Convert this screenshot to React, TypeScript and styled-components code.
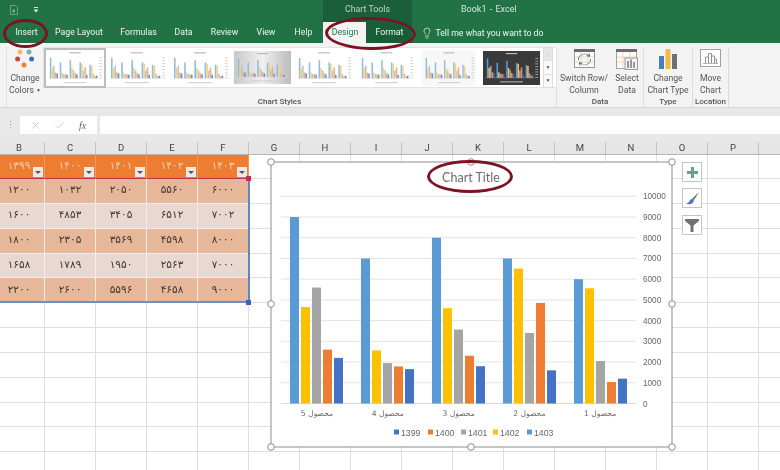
import React from "react";
import styled, { createGlobalStyle } from "styled-components";
import { X, Check, Lightbulb } from "lucide-react";

const Global = createGlobalStyle`
  html, body { margin: 0; padding: 0; background: #fff; overflow: hidden; }
  #root { width: 780px; height: 470px; overflow: hidden; }
  * { box-sizing: border-box; }
`;

const Page = styled.div`
  width: 780px; height: 470px; position: relative; overflow: hidden;
  font-family: Roboto, "Liberation Sans", sans-serif; color: #444;
  filter: blur(0.35px);
`;
const TitleBar = styled.div`
  height: 22px; background: #217346; display: flex; color: #d5e6da; font-size: 9px; line-height: 19px;
`;
const Quick = styled.div`
  width: 323px; display: flex; align-items: center; padding: 0 0 3px 10px; gap: 15px;
`;
const ChartTools = styled.div`
  width: 89px; background: #1b5f3a; text-align: center; color: #bcd5c4; font-size: 8.8px;
`;
const DocName = styled.div` padding-left: 49px; word-spacing: 1px; `;
const TabRow = styled.div`
  height: 21px; background: #217346; display: flex; align-items: stretch; padding-left: 6.5px;
`;
const Tab = styled.div<{ $state?: "active" | "dark"; $w: number }>`
  width: ${(p) => p.$w}px; text-align: center; font-size: 8.7px; line-height: 21px; white-space: nowrap;
  color: ${(p) => (p.$state === "active" ? "#217346" : "#eef5f0")};
  background: ${(p) => (p.$state === "active" ? "#f3f3f3" : p.$state === "dark" ? "#185c38" : "transparent")};
  padding-left: ${(p) => (p.$state ? 2 : 0)}px;
`;
const TellMe = styled.div`
  display: flex; align-items: center; gap: 3px; padding-left: 9px; font-size: 8.7px; color: #eef5f0; white-space: nowrap;
`;
const Ribbon = styled.div`
  height: 65px; background: #f3f3f3; border-bottom: 1px solid #d8d8d8; display: flex; padding-top: 4px;
`;
const Group = styled.div<{ $w: number; $line?: boolean }>`
  width: ${(p) => p.$w}px; height: 60px; position: relative; display: flex; flex-direction: column;
  ${(p) => (p.$line ? "border-right: 1px solid #dcdcdc;" : "")}
`;
const GroupBody = styled.div` flex: 1; display: flex; min-height: 0; `;
const GroupLabel = styled.div<{ $shift?: number }>`
  height: 11px; text-align: center; font-size: 8px; line-height: 11px; color: #555; font-weight: 500;
  white-space: nowrap; padding-right: ${(p) => p.$shift ?? 0}px;
`;
const RibbonBtn = styled.div<{ $w: number }>`
  width: ${(p) => p.$w}px; display: flex; flex-direction: column; align-items: center;
  font-size: 8.6px; line-height: 11.5px; color: #555; text-align: center; white-space: nowrap;
  padding-top: 2px;
`;
const BtnIcon = styled.div` height: 24px; display: flex; align-items: flex-start; justify-content: center; `;
const Colors = styled(RibbonBtn)` margin-left: 6px; border-left: 1px solid #e2e2e2; `;
const Caret = styled.span` font-size: 5px; vertical-align: 1px; margin-left: 2px; `;
const Gallery = styled.div`
  display: grid; grid-template-columns: repeat(8, 62.3px); width: 514px; height: 41px; background: #fff;
  border: 1px solid #e3e3e3; align-items: center; justify-items: center; position: relative;
`;
const ThumbBox = styled.div<{ $on?: boolean; $w: number; $h: number }>`
  width: ${(p) => p.$w}px; height: ${(p) => p.$h}px;
  ${(p) => (p.$on ? "outline: 2.5px solid #bdbdbd;" : "")}
  svg { display: block; width: 100%; height: 100%; }
`;
const Scroller = styled.div`
  width: 10px; height: 41px; margin-left: -14px; display: flex; flex-direction: column; border: 1px solid #dcdcdc; background: #f8f8f8; z-index: 1;
`;
const ScrollPart = styled.div<{ $muted?: boolean }>`
  flex: 1; display: flex; align-items: center; justify-content: center; font-size: 5px; line-height: 1;
  color: ${(p) => (p.$muted ? "#ddd" : "#555")}; background: ${(p) => (p.$muted ? "#e6e6e6" : "transparent")};
  border-bottom: 1px solid #e0e0e0; &:last-child { border-bottom: 0; }
`;
const FormulaRow = styled.div`
  height: 34px; background: #e8e8e8; display: flex; align-items: flex-start; padding-top: 8px;
`;
const Grip = styled.div`
  width: 20px; text-align: center; color: #9a9a9a; font-size: 9px; line-height: 18px;
`;
const NameBox = styled.div`
  width: 77px; height: 18px; background: #fff; display: flex; align-items: center; justify-content: space-around; padding: 0 4px 0 3px;
`;
const Fx = styled.span` font-family: "Liberation Serif", serif; font-style: italic; font-size: 10px; color: #666; `;
const FormulaInput = styled.div` flex: 1; height: 18px; margin-left: 3px; background: #fff; `;
const Sheet = styled.div` position: relative; height: 328px; background: #fff; `;
const HeadRow = styled.div` display: flex; height: 13px; background: #e6e6e6; border-bottom: 1px solid #b5b5b5; `;
const HeadCell = styled.div<{ $w: number; $first?: boolean }>`
  width: ${(p) => p.$w}px; flex: none; text-align: center; font-size: 9.5px; line-height: 12px; color: #444;
  border-right: 1px solid #c4c4c4; padding-right: ${(p) => (p.$first ? 6 : 0)}px;
`;
const Row = styled.div<{ $h: number }>` display: flex; height: ${(p) => p.$h}px; `;
const Cell = styled.div<{ $w: number; $kind?: "head" | "dark" | "light"; $first?: boolean }>`
  width: ${(p) => p.$w}px; flex: none; position: relative;
  display: flex; align-items: center; justify-content: center;
  padding: 0 ${(p) => (p.$first ? 6 : 0)}px ${(p) => (p.$kind === "head" ? 4 : 3)}px 0;
  font-family: "DejaVu Sans", sans-serif; font-size: 10.5px; direction: rtl;
  border-right: 1px solid ${(p) => (p.$kind ? (p.$kind === "head" ? "#f09a5e" : "#f5ece7") : "#dedede")};
  border-bottom: 1px solid ${(p) => (p.$kind ? (p.$kind === "head" ? "#c2304c" : "#f5ece7") : "#dedede")};
  color: ${(p) => (p.$kind === "head" ? "#f7d0b4" : "#3d3631")};
  background: ${(p) => (p.$kind === "head" ? "#ed7d31" : p.$kind === "dark" ? "#e6b899" : p.$kind === "light" ? "#e8d8d1" : "#fff")};
`;
const Filter = styled.div`
  position: absolute; right: 1px; bottom: 1px; width: 10px; height: 10px; background: #ece9e8;
  display: flex; align-items: center; justify-content: center;
  &::after { content: ""; border-left: 3px solid transparent; border-right: 3px solid transparent; border-top: 3px solid #555; }
`;
const TableEdge = styled.div`
  position: absolute; left: 0; top: 36px; width: 250px; height: 125px;
  border-right: 2px solid #5b88c4; border-bottom: 2px solid #6c8fc6; pointer-events: none;
`;
const Knob = styled.div<{ $c: string; $top: number }>`
  position: absolute; left: 246px; top: ${(p) => p.$top}px; width: 5px; height: 5px; background: ${(p) => p.$c};
`;
const ChartLayer = styled.svg`
  position: absolute; left: 262px; top: 12px; width: 420px; height: 300px;
  font-family: "Liberation Sans", sans-serif;
`;
const SideBtn = styled.div<{ $top: number }>`
  position: absolute; left: 682px; top: ${(p) => p.$top}px; width: 20px; height: 20px; background: #fff;
  border: 1px solid #c4c4c4; display: flex; align-items: center; justify-content: center;
`;
const Ring = styled.div<{ $x: number; $y: number; $w: number; $h: number; $r?: number }>`
  position: absolute; left: ${(p) => p.$x}px; top: ${(p) => p.$y}px; width: ${(p) => p.$w}px; height: ${(p) => p.$h}px;
  border: 3px solid #7a1424; border-radius: 50%; transform: rotate(${(p) => p.$r ?? 0}deg); pointer-events: none;
`;

const COLS = ["B","C","D","E","F","G","H","I","J","K","L","M","N","O","P",""];
const HEADS = ["۱۳۹۹","۱۴۰۰","۱۴۰۱","۱۴۰۲","۱۴۰۳"];
const DATA = [
  ["۱۲۰۰","۱۰۳۲","۲۰۵۰","۵۵۶۰","۶۰۰۰"],
  ["۱۶۰۰","۴۸۵۳","۳۴۰۵","۶۵۱۲","۷۰۰۲"],
  ["۱۸۰۰","۲۳۰۵","۳۵۶۹","۴۵۹۸","۸۰۰۰"],
  ["۱۶۵۸","۱۷۸۹","۱۹۵۰","۲۵۶۳","۷۰۰۰"],
  ["۲۲۰۰","۲۶۰۰","۵۵۹۶","۴۶۵۸","۹۰۰۰"],
];
const SERIES = [
  [9000, 4658, 5596, 2600, 2200],
  [7000, 2563, 1950, 1789, 1658],
  [8000, 4598, 3569, 2305, 1800],
  [7000, 6512, 3405, 4853, 1600],
  [6000, 5560, 2050, 1032, 1200],
];
const BAR = ["#5b9bd5", "#ffc000", "#a5a5a5", "#ed7d31", "#4472c4"];
const colW = (i: number) => (i === 0 ? 45 : 51);

function Thumb({ w, h, bg = "#fff", on, dark, title = true }: { w: number; h: number; bg?: string; on?: boolean; dark?: boolean; title?: boolean }) {
  const id = `g${w}${h}${dark ? 1 : 0}`;
  const pale = dark ? ["#5b9bd5","#f2c46d","#a5a5a5","#e8915a","#4472c4"] : ["#8fbce4","#f1d27f","#c4c4c4","#eeac80","#6f8fd2"];
  return (
    <ThumbBox $on={on} $w={w} $h={h}>
      <svg viewBox="0 0 60 38" preserveAspectRatio="none">
        <defs>
          <linearGradient id={id} x1="0" y1="0" x2="1" y2="0">
            <stop offset="0" stopColor="#c8c8c8" />
            <stop offset="0.5" stopColor="#f0f0f0" />
            <stop offset="1" stopColor="#bcbcbc" />
          </linearGradient>
        </defs>
        <rect width="60" height="38" fill={bg === "grad" ? `url(#${id})` : bg} />
        {title && <rect x="24" y="2.500" width="12" height="1" fill={dark ? "#ddd" : "#aaa"} />}
        {SERIES.map((g, i) =>
          g.map((v, j) => (
            <rect key={`${i}${j}`} x={4 + i * 10.2 + j * 1.7} y={30 - v * 0.0024} width="1.6" height={v * 0.0024} fill={pale[j]} />
          ))
        )}
        <line x1="3" y1="30" x2="54" y2="30" stroke={dark ? "#bbb" : "#ddd"} strokeWidth="0.4" />
        {[8, 11, 14, 17, 20, 23, 26, 29].map((y) => (
          <rect key={y} x="55" y={y} width="3" height="0.8" fill={dark ? "#bbb" : "#c8c8c8"} />
        ))}
        <rect x="18" y="34" width="24" height="1" fill={dark ? "#ccc" : "#c8c8c8"} />
      </svg>
    </ThumbBox>
  );
}

function ChartDrawing() {
  const ox = 262, oy = 154;
  const base = 403.5, k = 207.2 / 10000;
  const bx = [0, 11, 22, 33, 44];
  const handles = [[271,162],[471,162],[672,162],[271,304],[672,304],[271,447],[471,447],[672,447]];
  const legend: [number, string, string][] = [
    [394, "#4472c4", "1399"], [428, "#ed7d31", "1400"], [461, "#a5a5a5", "1401"], [493, "#ffc000", "1402"], [527, "#5b9bd5", "1403"],
  ];
  return (
    <ChartLayer viewBox={`${ox} ${oy} 420 300`}>
      <rect x="271" y="162" width="401" height="285" fill="#fff" stroke="#a8a8a8" strokeWidth="1.3" />
      {[1,2,3,4,5,6,7,8,9,10].map((n) => (
        <line key={n} x1="281" x2="636" y1={base - n * 1000 * k} y2={base - n * 1000 * k} stroke="#e4e4e4" strokeWidth="1" />
      ))}
      <line x1="281" x2="636" y1={base} y2={base} stroke="#dadada" strokeWidth="1" />
      {SERIES.map((g, i) =>
        g.map((v, j) => (
          <rect key={`${i}-${j}`} x={290 + i * 71 + bx[j]} y={base - v * k} width="9" height={v * k} fill={BAR[j]} />
        ))
      )}
      {[0,1,2,3,4,5,6,7,8,9,10].map((n) => (
        <text key={n} x="643" y={base - n * 1000 * k + 3} fontSize="8.2" fill="#666">{n * 1000}</text>
      ))}
      {[5,4,3,2,1].map((n, i) => (
        <text key={n} x={317 + i * 70.8} y="416" fontSize="7.6" fill="#666" textAnchor="middle" direction="rtl" fontFamily="DejaVu Sans, sans-serif">{`محصول ${n}`}</text>
      ))}
      {legend.map(([x, c, t]) => (
        <g key={t}>
          <rect x={x} y="429.5" width="5" height="5" fill={c} />
          <text x={x + 7} y="435.500" fontSize="8.7" fill="#666">{t}</text>
        </g>
      ))}
      <text x="471" y="181.500" fontSize="12.5" fill="#6c6c6c" textAnchor="middle" fontFamily="Lato, sans-serif">Chart Title</text>
      {handles.map(([x, y]) => (
        <circle key={`${x}${y}`} cx={x} cy={y} r="3.3" fill="#fff" stroke="#8c8c8c" strokeWidth="1" />
      ))}
    </ChartLayer>
  );
}

const TABS: [string, number][] = [["Insert",40],["Page Layout",65],["Formulas",54],["Data",36],["Review",46],["View",37],["Help",38]];

export default function App() {
  return (
    <Page>
      <Global />
      <TitleBar>
        <Quick>
          <svg width="8" height="10" viewBox="0 0 8 10"><path d="M.5.5h5l2 2v7h-7z" fill="none" stroke="#7fae92" strokeWidth=".8" /><rect x="2.500" y="4.500" width="2.500" height="3" fill="#7fae92" /></svg>
          <svg width="6" height="8" viewBox="0 0 6 8"><rect x="1" y="1" width="4" height="1" fill="#dbe8df" /><path d="M.5 3.500h5L3 6.500z" fill="#dbe8df" /></svg>
        </Quick>
        <ChartTools>Chart Tools</ChartTools>
        <DocName>Book1 - Excel</DocName>
      </TitleBar>
      <TabRow>
        {TABS.map(([t, w]) => <Tab key={t} $w={w}>{t}</Tab>)}
        <Tab $state="active" $w={43}>Design</Tab>
        <Tab $state="dark" $w={46}>Format</Tab>
        <TellMe><Lightbulb size={12} strokeWidth={1.4} color="#eef5f0" />Tell me what you want to do</TellMe>
      </TabRow>
      <Ribbon>
        <Group $w={43}>
          <GroupBody>
            <Colors $w={37}>
              <BtnIcon>
                <svg width="24" height="22" viewBox="0 0 24 22" style={{ marginTop: -2 }}>
                  <circle cx="7" cy="5" r="2.500" fill="#f2b872" /><circle cx="16" cy="5" r="2.500" fill="#82ada6" />
                  <circle cx="4.600" cy="12" r="2.500" fill="#d8412f" /><circle cx="18.600" cy="12" r="2.500" fill="#3d6fb0" />
                  <circle cx="11" cy="18" r="2.500" fill="#ed7d31" />
                </svg>
              </BtnIcon>
              <span>Change</span>
              <span>Colors<Caret>▼</Caret></span>
            </Colors>
          </GroupBody>
        </Group>
        <Group $w={514} $line>
          <GroupBody>
            <Gallery>
              <Thumb w={58} h={36} on />
              <Thumb w={60} h={36} />
              <Thumb w={60} h={36} />
              <Thumb w={57} h={33} bg="grad" />
              <Thumb w={58} h={36} />
              <Thumb w={57} h={36} />
              <Thumb w={54} h={36} bg="#f7f7f7" />
              <Thumb w={57} h={34} bg="#3a3a3a" dark />
            </Gallery>
            <Scroller>
              <ScrollPart $muted>▲</ScrollPart>
              <ScrollPart>▼</ScrollPart>
              <ScrollPart>▼</ScrollPart>
            </Scroller>
          </GroupBody>
          <GroupLabel $shift={40}>Chart Styles</GroupLabel>
        </Group>
        <Group $w={87} $line>
          <GroupBody>
            <RibbonBtn $w={54}>
              <BtnIcon>
                <svg width="21" height="20" viewBox="0 0 21 20">
                  <rect x=".5" y=".5" width="20" height="18" fill="#fbfbfb" stroke="#999" />
                  <rect x="0" y="0" width="21" height="3" fill="#6b6b6b" />
                  <path d="M7 3v15M14 3v15M1 8h19M1 13h19" stroke="#f0c894" strokeWidth=".7" />
                  <path d="M5 11a6 5 0 0 1 9-5l-2 1 4 1 0-4-1 2a7 6 0 0 0-11 5zM16 10a6 5 0 0 1-9 5l2-1-4-1 0 4 1-2a7 6 0 0 0 11-5z" fill="#3f79b8" />
                </svg>
              </BtnIcon>
              <span>Switch Row/</span>
              <span>Column</span>
            </RibbonBtn>
            <RibbonBtn $w={32}>
              <BtnIcon>
                <svg width="22" height="21" viewBox="0 0 22 21">
                  <rect x=".5" y=".5" width="20" height="19" fill="#fbfbfb" stroke="#a5a5a5" />
                  <rect x="0" y="0" width="21" height="3" fill="#6b6b6b" />
                  <path d="M7 3v16M14 3v16M1 8h19M1 13h19" stroke="#f0c894" strokeWidth=".7" />
                  <rect x="9" y="9" width="12.500" height="11.500" fill="#f3f3f3" stroke="#9a9a9a" />
                  <path d="M12 12v7M15 10.500V19M18 13v6" stroke="#808080" strokeWidth="1.6" />
                </svg>
              </BtnIcon>
              <span>Select</span>
              <span>Data</span>
            </RibbonBtn>
          </GroupBody>
          <GroupLabel>Data</GroupLabel>
        </Group>
        <Group $w={49} $line>
          <GroupBody>
            <RibbonBtn $w={49}>
              <BtnIcon>
                <svg width="18" height="20" viewBox="0 0 18 20">
                  <rect x="0" y="7" width="5" height="13" fill="#4a7ebb" /><rect x="6.500" y="0" width="5" height="20" fill="#f4b942" /><rect x="13" y="5" width="5" height="15" fill="#6f6f6f" />
                </svg>
              </BtnIcon>
              <span>Change</span>
              <span>Chart Type</span>
            </RibbonBtn>
          </GroupBody>
          <GroupLabel>Type</GroupLabel>
        </Group>
        <Group $w={36} $line>
          <GroupBody>
            <RibbonBtn $w={36}>
              <BtnIcon>
                <svg width="21" height="20" viewBox="0 0 21 20">
                  <rect x=".5" y=".5" width="20" height="17" fill="#fff" stroke="#a0a0a0" />
                  <path d="M5.500 14V8h3v6M8.500 14V4.500h3V14M11.500 14V7h3v7M14.500 14v-4h2v4" fill="none" stroke="#8a8a8a" strokeWidth=".9" />
                  <path d="M3 14.500h15" stroke="#a0a0a0" strokeWidth=".8" />
                </svg>
              </BtnIcon>
              <span>Move</span>
              <span>Chart</span>
            </RibbonBtn>
          </GroupBody>
          <GroupLabel>Location</GroupLabel>
        </Group>
      </Ribbon>
      <FormulaRow>
        <Grip>⋮</Grip>
        <NameBox>
          <X size={11} color="#b5b5b5" strokeWidth={1.6} />
          <Check size={11} color="#c0c0c0" strokeWidth={1.6} />
          <Fx>fx</Fx>
        </NameBox>
        <FormulaInput />
      </FormulaRow>
      <Sheet>
        <HeadRow>
          {COLS.map((c, i) => <HeadCell key={i} $w={colW(i)} $first={i === 0}>{c}</HeadCell>)}
        </HeadRow>
        <Row $h={24}>
          {COLS.map((c, i) => (
            <Cell key={i} $w={colW(i)} $first={i === 0} $kind={i < 5 ? "head" : undefined}>
              {i < 5 ? <>{HEADS[i]}<Filter /></> : null}
            </Cell>
          ))}
        </Row>
        {Array.from({ length: 12 }).map((_, r) => (
          <Row $h={24.85} key={r}>
            {COLS.map((c, i) => (
              <Cell key={i} $w={colW(i)} $first={i === 0} $kind={r < 5 && i < 5 ? (r % 2 ? "light" : "dark") : undefined}>
                {r < 5 && i < 5 ? DATA[r][i] : null}
              </Cell>
            ))}
          </Row>
        ))}
        <TableEdge />
        <Knob $c="#c2304c" $top={34} />
        <Knob $c="#3d62b0" $top={158} />
        <ChartDrawing />
        <SideBtn $top={20}>
          <svg width="13" height="13" viewBox="0 0 13 13"><path d="M5 1h3v4h4v3H8v4H5V8H1V5h4z" fill="#5fa58a" /></svg>
        </SideBtn>
        <SideBtn $top={46}>
          <svg width="15" height="15" viewBox="0 0 15 15"><path d="M14 1L7 8l2 1z" fill="#666" /><path d="M7 8c-2 0-2 2-3 3-1 1-2 1-3 1.500 2 1 6 1 7-1 .6-1 .6-2 1-2.500z" fill="#4f74b5" /></svg>
        </SideBtn>
        <SideBtn $top={73}>
          <svg width="14" height="14" viewBox="0 0 14 14"><path d="M0 1h14v2L8.500 7.500V14h-3V7.500L0 3z" fill="#707070" /></svg>
        </SideBtn>
      </Sheet>
      <Ring $x={3} $y={19} $w={45} $h={29} />
      <Ring $x={325} $y={17} $w={91} $h={33} $r={1} />
      <Ring $x={427} $y={160} $w={86} $h={33} />
    </Page>
  );
}
